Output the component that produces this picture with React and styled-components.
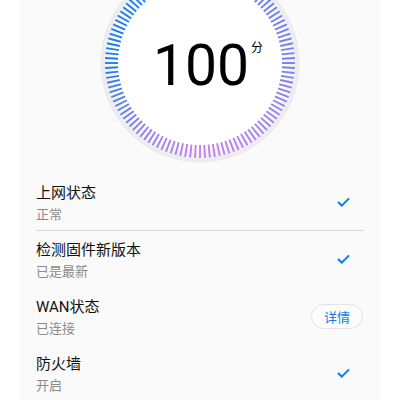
import React from "react";
import styled, { createGlobalStyle } from "styled-components";

// Page reset
const GlobalStyle = createGlobalStyle`
  html, body {
    margin: 0;
    padding: 0;
    background: #ffffff;
  }
  body {
    font-family: Roboto, "Noto Sans CJK SC", "Noto Sans", sans-serif;
    -webkit-font-smoothing: antialiased;
  }
`;

// Colour stops around the dial, angle measured clockwise from the top
const stops = [
  [0, [72, 126, 240]],
  [40, [106, 127, 240]],
  [90, [122, 128, 240]],
  [140, [170, 128, 240]],
  [180, [200, 128, 242]],
  [220, [144, 128, 240]],
  [250, [74, 126, 240]],
  [275, [26, 124, 232]],
  [320, [30, 126, 240]],
  [360, [72, 126, 240]],
];

const colorAt = (deg) => {
  for (let i = 0; i < stops.length - 1; i++) {
    const [a0, c0] = stops[i];
    const [a1, c1] = stops[i + 1];
    if (deg >= a0 && deg <= a1) {
      const t = (deg - a0) / (a1 - a0);
      const c = c0.map((v, k) => Math.round(v + (c1[k] - v) * t));
      return `rgb(${c[0]}, ${c[1]}, ${c[2]})`;
    }
  }
  return "rgb(72,126,240)";
};

const TICKS = 120;

function Dial() {
  const ticks = [];
  for (let i = 0; i < TICKS; i++) {
    const deg = (360 / TICKS) * i;
    const rad = (deg * Math.PI) / 180;
    const sx = Math.sin(rad);
    const sy = -Math.cos(rad);
    ticks.push(
      <line
        key={i}
        x1={100 + sx * 82}
        y1={100 + sy * 82}
        x2={100 + sx * 95}
        y2={100 + sy * 95}
        stroke={colorAt(deg)}
        strokeWidth="1.9"
      />
    );
  }
  return (
    <svg width="200" height="200" viewBox="0 0 200 200">
      <defs>
        <radialGradient id="rim" cx="100" cy="100" r="100" gradientUnits="userSpaceOnUse">
          <stop offset="0.85" stopColor="#ffffff" />
          <stop offset="0.93" stopColor="#f2f2f2" />
          <stop offset="1" stopColor="#e9e9e9" />
        </radialGradient>
      </defs>
      <circle cx="100" cy="100" r="99.5" fill="url(#rim)" />
      {ticks}
    </svg>
  );
}

function Check() {
  return (
    <CheckMark width="13" height="10" viewBox="0 0 13 10">
      <path d="M1 5 L4.8 8.6 L12 1.4" fill="none" stroke="#0a7cf0" strokeWidth="2" />
    </CheckMark>
  );
}

const items = [
  { title: "上网状态", sub: "正常", action: "check", divider: true },
  { title: "检测固件新版本", sub: "已是最新", action: "check" },
  { title: "WAN状态", sub: "已连接", action: "button" },
  { title: "防火墙", sub: "开启", action: "check", divider: true },
];

export default function App() {
  return (
    <>
      <GlobalStyle />
      <Panel>
        <Gauge>
          <DialWrap>
            <Dial />
            <Score>
              100
              <Unit>分</Unit>
            </Score>
          </DialWrap>
        </Gauge>
        <List>
          {items.map((item) => (
            <Row key={item.title} $divider={item.divider}>
              <Texts>
                <Title>{item.title}</Title>
                <Sub>{item.sub}</Sub>
              </Texts>
              {item.action === "check" ? <Check /> : <DetailButton>详情</DetailButton>}
            </Row>
          ))}
        </List>
      </Panel>
    </>
  );
}

const Panel = styled.div`
  width: 360px;
  min-height: 100vh;
  margin: 0 auto;
  background: #fafafa;
  display: flex;
  flex-direction: column;
`;

const Gauge = styled.div`
  height: 174px;
  display: flex;
  justify-content: center;
  overflow: hidden;
`;

const DialWrap = styled.div`
  position: relative;
  width: 200px;
  height: 200px;
  margin-top: -37px;
  flex-shrink: 0;
`;

const Score = styled.div`
  position: absolute;
  left: 50%;
  top: 50%;
  transform: translate(-50%, -50%);
  font-family: Roboto, sans-serif;
  font-size: 57px;
  line-height: 1;
  color: #000;
  margin-top: 2px;
  margin-left: 1px;
`;

const Unit = styled.span`
  position: absolute;
  left: 100%;
  top: 4px;
  margin-left: 2px;
  font-family: "Noto Sans CJK SC", sans-serif;
  font-size: 12px;
  line-height: 1;
  color: #000;
`;

const List = styled.div`
  display: flex;
  flex-direction: column;
`;

const Row = styled.div`
  height: 57px;
  box-sizing: border-box;
  margin: 0 16px;
  display: flex;
  align-items: center;
  justify-content: space-between;
  border-bottom: 1px solid ${(p) => (p.$divider ? "#d9d9d9" : "transparent")};
`;

const Texts = styled.div`
  display: flex;
  flex-direction: column;
  gap: 3px;
  padding-top: 2px;
`;

const Title = styled.div`
  font-size: 15px;
  line-height: 20px;
  color: #111;
`;

const Sub = styled.div`
  font-size: 13px;
  line-height: 17px;
  color: #8a8a8a;
`;

const CheckMark = styled.svg`
  margin-right: 14px;
`;

const DetailButton = styled.button`
  width: 52px;
  height: 25px;
  border-radius: 13px;
  border: 1px solid #e3e3e3;
  background: #fcfcfc;
  color: #0a7cf0;
  font-family: "Noto Sans CJK SC", sans-serif;
  font-size: 13px;
  padding: 0;
  margin-right: 1px;
`;
